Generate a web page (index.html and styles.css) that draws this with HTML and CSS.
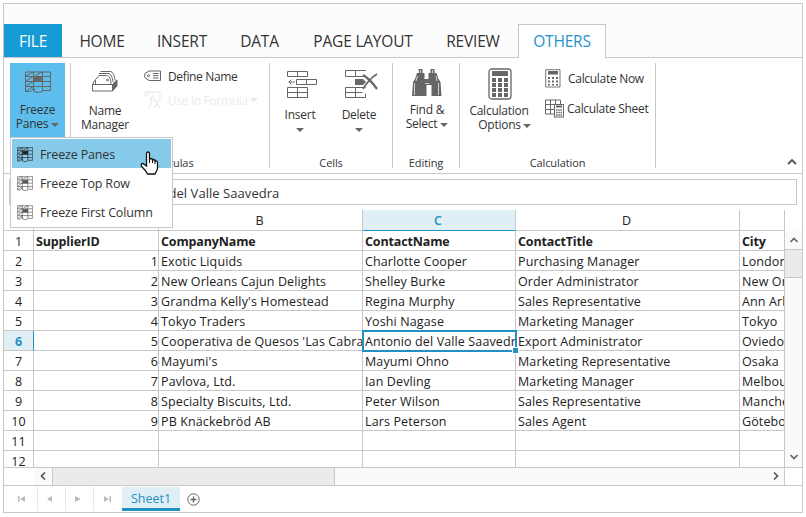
FILE: index.html
```html
<!DOCTYPE html>
<html lang="en">
<head>
<meta charset="utf-8">
<title>Spreadsheet</title>
<link rel="stylesheet" href="styles.css">
</head>
<body>
<svg width="0" height="0" class="defs">
  <defs>
    <symbol id="frz" viewBox="0 0 26 22" preserveAspectRatio="none">
      <path d="M.5 1H25.500V19.500H18M.5 1V20.500M1 5.500H25M1 10.500H25M1 15.500H25M8.500 1V20M17.500 1V20M1 5L8 1M1 10L9 5M1 15L9 10M1 20L9 15M10 5L17 1M.5 20.500H5L9 17V20.500Q13 22.500 17.500 20.500" fill="none" stroke="currentColor"/>
      <path d="M9 6h9v5H9z" fill="currentColor"/>
    </symbol>
    <symbol id="calc" viewBox="0 0 24 32">
      <rect x="1" y="1" width="22" height="30" rx="3" fill="none" stroke="currentColor" stroke-width="1.300"/>
      <path d="M4 3h16v5H4zM4 10h4v4H4zM10 10h4v4h-4zM16 10h4v4h-4zM4 15h4v4H4zM10 15h4v4h-4zM16 15h4v4h-4zM4 20h4v4H4zM10 20h4v4h-4zM16 20h4v4h-4zM4 25h4v4H4zM10 25h4v4h-4zM16 25h4v4h-4z" fill="currentColor"/>
    </symbol>
  </defs>
</svg>
<main class="app">
  <nav class="tabs">
    <span class="file">FILE</span><span class="t-home">HOME</span><span class="t-insert">INSERT</span><span class="t-data">DATA</span><span class="t-page">PAGE LAYOUT</span><span class="t-review">REVIEW</span><span class="active">OTHERS</span>
  </nav>
  <section class="ribbon">
    <div class="group g-window">
      <button class="big freeze"><svg width="26" height="22"><use href="#frz"/></svg><span>Freeze<br>Panes <i class="arrow"></i></span></button>
      <div class="menu">
        <div class="item hot"><svg width="16" height="15"><use href="#frz"/></svg>Freeze Panes</div>
        <div class="item"><svg width="16" height="15"><use href="#frz"/></svg>Freeze Top Row</div>
        <div class="item"><svg width="16" height="15"><use href="#frz"/></svg>Freeze First Column</div>
        <svg class="hand" width="19" height="24" viewBox="0 0 19 24"><path d="M6.500 15V2.500C6.500.5 9.500.5 9.500 2.500V9c0-2 3-2 3 0v1c0-2 2.500-2 2.500 0v1c0-1.500 2.500-1.500 2.500.5V17c0 2-1 3-1.500 4l-1 2H7.500C6 19 2 17 1.200 14.500c-.4-2 1.600-2.500 2.600-1.500z" fill="#fff" stroke="#111" stroke-width="1.300"/><path d="M9.500 8v4M12.500 9v3M15 10.500V13" stroke="#111"/></svg>
      </div>
    </div>
    <div class="group g-formulas">
      <button class="big names"><svg width="26" height="21" viewBox="0 0 26 21" fill="none" stroke="currentColor"><path d="M.5 13.500l2-4M.5 13.500h20v6.500M.5 13.500V20h20M20.500 13.500L25 9M3.500 13V8.500L7 4.500h7.500c3 0 4.500 4 4.500 8.500M7 2.500h9c3 0 4.500 4 5 8.500M8.500.5H18c3 0 4.500 4 5 9"/><path d="M20.500 13.500L25 9v6l-4.500 5z" fill="currentColor"/><circle cx="15.500" cy="9" r="1"/></svg><span>Name<br>Manager</span></button>
      <div class="stack">
        <div class="small"><svg width="18" height="12" viewBox="0 0 18 12" fill="none" stroke="currentColor"><path d="M5 1h11.500v9.500H5L.8 7.500v-4zM9 3.500h5.500M9 5.700h5.500M9 8h5.500"/><circle cx="4.500" cy="5.700" r="1"/></svg><span>Define Name</span></div>
        <div class="small off"><svg width="18" height="19" viewBox="0 0 18 19" fill="none" stroke="currentColor"><path d="M3 6L1 4V2l2-1h13v7" stroke-width="1.300"/><circle cx="4" cy="3.500" r=".7"/><path d="M11 5c-3-1-4 2-4 5s-1 6-3 7M5 8h5M10 9c3 0 3 7 6 7M16 9c-3 0-3 7-6 7" stroke-width="1.300"/></svg><span>Use In Formula</span><i class="arrow"></i></div>
      </div>
      <div class="caption">Formulas</div>
    </div>
    <div class="group g-cells">
      <button class="big low ins"><svg width="31" height="29" viewBox="0 0 31 29" fill="none" stroke="currentColor"><path d="M.5 1.500h20v5H.5zM10.500 1.500v5M9.500 9.500h20v5h-20zM19.500 9.500v5M.5 17.500h20v10H.5zM.5 22.500h20M10.500 17.500v10M1.500 12H7.500M4.500 9.500L2 12l2.500 2.500"/></svg><span>Insert<br><i class="arrow"></i></span></button>
      <button class="big low del"><svg width="33" height="29" viewBox="0 0 33 29" fill="none" stroke="currentColor"><path d="M21 .5H.5v6h19M10.500.5v6M.5 17.500h20M.5 17.500v10h20v-4M.5 22.500h17M10.500 17.500v10"/><path d="M10 9h8l3 3-3 3h-8z" fill="currentColor" stroke="none"/><path d="M18 5q7 4 14 14" stroke-width="2.200"/><path d="M32 4q-8 5-14 15" stroke-width="1.600"/></svg><span>Delete<br><i class="arrow"></i></span></button>
      <div class="caption">Cells</div>
    </div>
    <div class="group g-edit">
      <button class="big find"><svg width="32" height="28" viewBox="0 0 32 28" fill="currentColor"><path d="M7.500 0h4v4h2v6h4V4h2V0h4v4h2l2 6 2 3 1 14h-10V16h-5v11H1L2 13l2-3 2-6h2zM14 12h4v2h-4z"/><path d="M9.500 1v3M21.500 1v3M3.500 14v12M27.500 14v12M6.500 7L5 12M25 7l1 5M14 14.500h4" stroke="#fff" fill="none" stroke-width=".7"/></svg><span>Find &amp;<br>Select <i class="arrow"></i></span></button>
      <div class="caption">Editing</div>
    </div>
    <div class="group g-calc">
      <button class="big copt"><svg width="24" height="32"><use href="#calc"/></svg><span>Calculation<br><span class="opts">Options<i class="arrow"></i></span></span></button>
      <div class="stack">
        <div class="small"><svg width="16" height="19" viewBox="0 0 16 19"><path d="M.7.7h14.300v17.300H.7z" fill="none" stroke="#777"/><path d="M3 2h10v3.500H3zM3 8h2v2H3zM7 8h2v2H7zM11 8h2v2h-2zM3 11.500h2v2H3zM7 11.500h2v2H7zM11 11.500h2v2h-2zM3 15h2v1.500H3zM7 15h2v1.500H7zM11 15h2v1.500h-2z" fill="currentColor"/></svg><span>Calculate Now</span></div>
        <div class="small sheetcalc"><svg width="19" height="19" viewBox="0 0 19 19" fill="none" stroke="currentColor"><path d="M9 15H.5V1h15v4M.5 5.500H9M.5 10.500H9M5.500 1v14M10.500 1v4"/><rect x="9.500" y="5.500" width="9" height="12.500" fill="#fff"/><path d="M11 7.500h6" stroke-width="2"/><path d="M11 11h6M11 13.500h6M11 16h6" stroke-dasharray="1.500 .75" stroke-width="1.500"/></svg><span>Calculate Sheet</span></div>
      </div>
      <div class="caption">Calculation</div>
    </div>
    <svg class="fold" width="10" height="8" viewBox="0 0 10 8"><path d="M1 6l4-4 4 4" fill="none" stroke="#555" stroke-width="1.800"/></svg>
  </section>
  <section class="formula"><div>Antonio del Valle Saavedra</div></section>
  <section class="body">
    <div class="grid">
      <div class="row head"><b></b><span>A</span><span>B</span><span class="sel">C</span><span>D</span><span></span></div>
      <div class="row first"><b>1</b><span>SupplierID</span><span>CompanyName</span><span>ContactName</span><span>ContactTitle</span><span>City</span></div>
      <div class="row"><b>2</b><span>1</span><span>Exotic Liquids</span><span>Charlotte Cooper</span><span>Purchasing Manager</span><span>London</span></div>
      <div class="row"><b>3</b><span>2</span><span>New Orleans Cajun Delights</span><span>Shelley Burke</span><span>Order Administrator</span><span>New Orleans</span></div>
      <div class="row"><b>4</b><span>3</span><span>Grandma Kelly's Homestead</span><span>Regina Murphy</span><span>Sales Representative</span><span>Ann Arbor</span></div>
      <div class="row"><b>5</b><span>4</span><span>Tokyo Traders</span><span>Yoshi Nagase</span><span>Marketing Manager</span><span>Tokyo</span></div>
      <div class="row cur"><b>6</b><span>5</span><span>Cooperativa de Quesos 'Las Cabras'</span><span class="cell"><em>Antonio del Valle Saavedra</em></span><span>Export Administrator</span><span>Oviedo</span></div>
      <div class="row"><b>7</b><span>6</span><span>Mayumi's</span><span>Mayumi Ohno</span><span>Marketing Representative</span><span>Osaka</span></div>
      <div class="row"><b>8</b><span>7</span><span>Pavlova, Ltd.</span><span>Ian Devling</span><span>Marketing Manager</span><span>Melbourne</span></div>
      <div class="row"><b>9</b><span>8</span><span>Specialty Biscuits, Ltd.</span><span>Peter Wilson</span><span>Sales Representative</span><span>Manchester</span></div>
      <div class="row"><b>10</b><span>9</span><span>PB Knäckebröd AB</span><span>Lars Peterson</span><span>Sales Agent</span><span>Göteborg</span></div>
      <div class="row"><b>11</b><span></span><span></span><span></span><span></span><span></span></div>
      <div class="row last"><b>12</b><span></span><span></span><span></span><span></span><span></span></div>
    </div>
    <div class="vbar">
      <div class="vup"><svg width="10" height="8" viewBox="0 0 10 8"><path d="M1.500 6L5 2.500 8.500 6" fill="none" stroke="#666" stroke-width="1.700"/></svg></div>
      <div class="vthumb"></div>
      <svg class="vdown" width="10" height="8" viewBox="0 0 10 8"><path d="M1.500 2L5 5.500 8.500 2" fill="none" stroke="#666" stroke-width="1.700"/></svg>
    </div>
  </section>
  <section class="hbar">
    <div class="hleft"><svg width="8" height="10" viewBox="0 0 8 10"><path d="M6 1.500L2.500 5 6 8.500" fill="none" stroke="#555" stroke-width="1.700"/></svg></div>
    <div class="hthumb"></div>
    <div class="htrack"><svg width="8" height="10" viewBox="0 0 8 10"><path d="M2 1.500L5.500 5 2 8.500" fill="none" stroke="#555" stroke-width="1.700"/></svg></div>
  </section>
  <footer class="sheets">
    <i><svg width="8" height="8"><path d="M0 1h1.500v6H0zM7 1v6L2 4z" fill="#bbb"/></svg></i>
    <i><svg width="8" height="8"><path d="M6 1v6L1 4z" fill="#bbb"/></svg></i>
    <i><svg width="8" height="8"><path d="M1 1v6l6-3z" fill="#bbb"/></svg></i>
    <i><svg width="8" height="8"><path d="M6.500 1H8v6H6.500zM1 1v6l5-3z" fill="#bbb"/></svg></i>
    <span class="sheet">Sheet1</span>
    <svg class="add" width="13" height="13" viewBox="0 0 13 13" fill="none" stroke="#666"><circle cx="6.500" cy="6.500" r="5.700"/><path d="M3.500 6.500h6M6.500 3.500v6" stroke-width="1.400"/></svg>
  </footer>
</main>
</body>
</html>
```
FILE: styles.css
```css
* { box-sizing: border-box; }
body { margin: 0; padding: 3px; background: #fff; color: #333; font-family: "Open Sans", sans-serif; font-size: 12px; }
.defs { position: absolute; }
svg { display: block; flex: none; }
.app { width: 800px; height: 510px; border: 1px solid #c8c8c8; display: flex; flex-direction: column; }
.tabs { height: 54px; padding-top: 20px; background: #fcfcfc; display: flex; border-bottom: 1px solid #c8c8c8; font-size: 15.500px; letter-spacing: -.2px; }
.tabs span { height: 33px; line-height: 34px; text-align: center; white-space: nowrap; }
.tabs .file { width: 58px; background: #179bd7; color: #fff; }
.t-home { width: 80px; }
.t-insert { width: 80px; }
.t-data { width: 75px; }
.t-page { width: 132px; }
.t-review { width: 88px; }
.tabs .active { width: 88px; height: 34px; line-height: 32px; margin-left: 1px; background: #fff; border: 1px solid #c8c8c8; border-bottom: 0; color: #1c93cf; }
.ribbon { height: 116px; border-bottom: 1px solid #c8c8c8; display: flex; padding-top: 5px; }
.group { height: 105px; border-right: 1px solid #c8c8c8; display: grid; grid-template-rows: 93px 12px; justify-content: start; align-items: start; letter-spacing: -.25px; }
.g-window { width: 67px; position: relative; }
.g-formulas { width: 199px; grid-template-columns: 68px 130px; }
.g-cells { width: 123px; grid-template-columns: 60px 58px 4px; }
.g-edit { width: 67px; grid-template-columns: 66px; }
.g-calc { width: 196px; grid-template-columns: 84px 111px; }
.g-calc .big { width: 78px; }
.caption { grid-row: 2; grid-column: 1 / -1; text-align: center; line-height: 13px; font-size: 11px; letter-spacing: -.1px; }
.big { border: 0; background: none; padding: 0; font: inherit; letter-spacing: inherit; color: #333; display: flex; flex-direction: column; align-items: center; line-height: 14px; text-align: center; white-space: nowrap; }
.big svg { color: #666; }
.freeze { width: 55px; height: 75px; margin-left: 6px; padding-top: 8px; background: #5dbeee; gap: 10px; }
.names { padding-top: 8px; gap: 12px; }
.low { padding-top: 7px; gap: 9px; }
.low svg { margin-left: 4px; }
.find { padding-top: 6px; gap: 6px; padding-left: 2px; }
.copt { padding-top: 5px; gap: 4px; }
.copt svg { margin-left: 2px; }
.copt .opts { margin-left: 11px; }
.arrow { display: inline-block; border: 4px solid transparent; border-top-color: #666; border-bottom: 0; vertical-align: 1px; }
.opts .arrow { margin-left: 2px; }
.small { display: flex; align-items: center; height: 24px; white-space: nowrap; gap: 6px; letter-spacing: -.35px; }
.small svg { color: #666; }
.g-formulas .stack { padding: 1px 0 0 5px; }
.small.off, .small.off svg { color: #ececec; }
.off .arrow { border-top-color: #e8e8e8; margin-left: -4px; }
.g-calc .stack { padding: 3px 0 0 1px; }
.g-calc .small { gap: 7px; letter-spacing: -.3px; }
.g-calc .sheetcalc { height: 36px; gap: 3px; }
.fold { margin: 95px 5px 0 auto; }
.menu { position: absolute; z-index: 5; left: 6px; top: 74px; width: 163px; height: 91px; border: 1px solid #c8c8c8; background: #fff; padding: 1px; letter-spacing: -.15px; }
.item { height: 29px; display: flex; align-items: center; padding: 2px 0 0 5px; gap: 7px; white-space: nowrap; font-size: 12.500px; }
.item svg { color: #555; }
.hot { background: #86cbea; }
.item.hot svg { color: #222; }
.hand { position: absolute; left: 129px; top: 13px; }
.formula { height: 36px; padding: 5px 5px 0; }
.formula div { height: 26px; border: 1px solid #c8c8c8; line-height: 26px; font-size: 13px; padding-left: 107px; letter-spacing: .05px; white-space: nowrap; }
.body { height: 258px; display: flex; border-bottom: 1px solid #c8c8c8; }
.grid { width: 781px; height: 257px; overflow: hidden; border-right: 1px solid #c8c8c8; font-size: 12.500px; color: #222; letter-spacing: .12px; }
.row { display: grid; grid-template-columns: 30px 125px 204px 153px 224px 60px; height: 20px; line-height: 21px; }
.row > * { border-right: 1px solid #c8c8c8; border-bottom: 1px solid #c8c8c8; white-space: nowrap; overflow: hidden; padding-left: 2px; font-weight: 400; }
.row b { text-align: center; padding: 0; letter-spacing: 0; }
.row span:nth-child(2) { text-align: right; }
.row.first span { font-weight: 700; text-align: left; letter-spacing: -.14px; }
.head { height: 21px; }
.row.head > * { text-align: center; padding: 0 2px 0 0; line-height: 22px; }
.row.head .sel { background: #e0eef6; border-bottom-color: #2390c4; color: #2390c4; font-weight: 600; }
.row.cur b { background: #e0eef6; border-right-color: #2390c4; color: #2390c4; font-weight: 700; }
.row.cur .cell { outline: 2px solid #2390c4; outline-offset: -1px; position: relative; overflow: visible; z-index: 1; }
.cell em { display: block; height: 19px; overflow: hidden; font-style: normal; }
.cell::after { content: ""; position: absolute; right: -3px; bottom: -3px; width: 5px; height: 5px; background: #2390c4; box-shadow: 0 0 0 1px #fff; }
.vbar { width: 17px; height: 236px; margin-top: 21px; background: #fafafa; }
.vup { height: 19px; border-bottom: 1px solid #c8c8c8; padding: 5px 0 0 4px; }
.vthumb { height: 28px; background: #ebebeb; border-bottom: 1px solid #c8c8c8; }
.vdown { margin: 175px 0 0 4px; }
.hbar { height: 18px; border-bottom: 1px solid #c8c8c8; display: flex; padding-left: 30px; }
.hleft { width: 19px; border-right: 1px solid #c8c8c8; background: #fafafa; padding: 3px 0 0 5px; }
.hthumb { width: 282px; background: #ebebeb; border-right: 1px solid #c8c8c8; }
.htrack { width: 450px; background: #fafafa; border-right: 1px solid #c8c8c8; display: flex; justify-content: flex-end; padding: 3px 4px 0 0; }
.sheets { height: 26px; display: flex; align-items: center; padding-left: 6px; }
.sheets i { width: 28px; height: 24px; border-right: 1px solid #e8e8e8; display: flex; align-items: center; justify-content: center; padding-right: 3px; }
.sheets i:nth-child(4) { border-right: 0; }
.sheet { width: 58px; height: 24px; background: #e0eef6; border-bottom: 3px solid #2390c4; color: #2390c4; text-align: center; line-height: 24px; font-size: 12.500px; }
.add { margin-left: 7px; }
```
